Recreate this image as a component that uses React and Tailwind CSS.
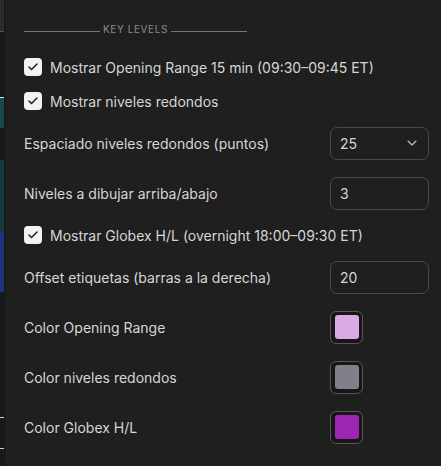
import { Check, ChevronDown } from "lucide-react";

const font = { fontFamily: "Inter, 'Noto Sans', sans-serif" };

function CheckRow({ label }) {
  return (
    <label className="flex h-[34px] items-center gap-2">
      <span className="flex h-[18px] w-[18px] items-center justify-center rounded-[4px] bg-[#f2f2f2]">
        <Check className="h-3 w-3 text-[#1f1f1f]" strokeWidth={3} />
      </span>
      <span>{label}</span>
    </label>
  );
}

function FieldRow({ label, children }) {
  return (
    <div className="flex h-[50px] items-center justify-between">
      <span>{label}</span>
      {children}
    </div>
  );
}

function NumberBox({ value }) {
  return (
    <div className="flex h-[33px] w-[99px] items-center rounded-[7px] border border-[#4a4a4a] pl-[9px]">
      {value}
    </div>
  );
}

function SelectBox({ value }) {
  return (
    <div className="flex h-[33px] w-[99px] items-center justify-between rounded-[7px] border border-[#4a4a4a] pl-[9px] pr-2">
      <span>{value}</span>
      <ChevronDown className="h-4 w-4 text-[#bdbdbd]" strokeWidth={1.75} />
    </div>
  );
}

function Swatch({ color }) {
  return (
    <div className="mr-[66px] flex h-[33px] w-[33px] items-center justify-center rounded-[6px] border border-[#575757] bg-[#171717]">
      <div className={`h-[24px] w-[24px] rounded-[3px] ${color}`} />
    </div>
  );
}

export default function App() {
  return (
    <div className="flex h-[466px] w-[441px] bg-[#1f1f1f] text-[14px] text-[#d6d6d6]" style={font}>
      {/* sliver of the chart behind the dialog */}
      <div className="flex w-[5px] flex-col border-r border-[#151515] bg-[#171a1c]">
        <div className="h-[31px] bg-[#2a2e2f]" />
        <div className="h-px bg-[#555]" />
        <div className="h-[65px]" />
        <div className="h-px bg-[#ddd]" />
        <div className="h-[30px] bg-[#164a4c]" />
        <div className="h-[32px]" />
        <div className="h-[72px] bg-[#123c3e]" />
        <div className="h-[60px] bg-[#1f3480]" />
        <div className="h-[125px]" />
        <div className="h-px bg-[#ccc]" />
        <div className="h-[30px]" />
        <div className="h-px bg-[#ccc]" />
      </div>

      <div className="flex flex-1 flex-col pl-[19px] pr-[12px] pt-[18px]">
        <div className="flex h-4 w-[223px] items-end gap-[3px] text-[10px] tracking-[0.6px] text-[#8c8c8c]">
          <div className="mb-[2px] h-px flex-1 bg-[#777]" />
          <span className="leading-none">KEY LEVELS</span>
          <div className="mb-[2px] h-px flex-1 bg-[#777]" />
        </div>

        <div className="mt-4">
          <CheckRow label="Mostrar Opening Range 15 min (09:30–09:45 ET)" />
          <CheckRow label="Mostrar niveles redondos" />
        </div>

        <FieldRow label="Espaciado niveles redondos (puntos)">
          <SelectBox value="25" />
        </FieldRow>
        <FieldRow label="Niveles a dibujar arriba/abajo">
          <NumberBox value="3" />
        </FieldRow>

        <CheckRow label="Mostrar Globex H/L (overnight 18:00–09:30 ET)" />

        <FieldRow label="Offset etiquetas (barras a la derecha)">
          <NumberBox value="20" />
        </FieldRow>
        <FieldRow label="Color Opening Range">
          <Swatch color="bg-[#dba9e3]" />
        </FieldRow>
        <FieldRow label="Color niveles redondos">
          <Swatch color="bg-[#808088]" />
        </FieldRow>
        <FieldRow label="Color Globex H/L">
          <Swatch color="bg-[#9c27b0]" />
        </FieldRow>
      </div>
    </div>
  );
}
